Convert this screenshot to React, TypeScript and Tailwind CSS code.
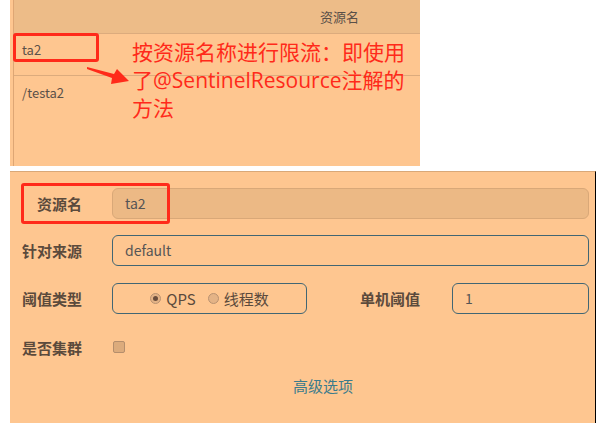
import type { ReactNode } from "react"

const font = { fontFamily: '"Noto Sans CJK SC", "Liberation Sans", sans-serif' }
const noteFont = { fontFamily: '"Open Sans", "Noto Sans CJK SC", sans-serif' }

function Label({ children, className = "" }: { children: ReactNode; className?: string }) {
  return (
    <div className={`whitespace-nowrap text-right text-[15px] font-bold leading-none text-[#5b4a3c] ${className}`}>
      {children}
    </div>
  )
}

function Radio({ checked, label }: { checked?: boolean; label: string }) {
  return (
    <span className="flex items-center gap-[5px]">
      <span className="flex h-[11px] w-[11px] items-center justify-center rounded-full border border-[#b99271] bg-[#e4b386]">
        {checked ? <span className="h-[5px] w-[5px] rounded-full bg-[#6b4e3d]" /> : null}
      </span>
      <span className="text-[15px] leading-none text-[#5b4a3c]">{label}</span>
    </span>
  )
}

export default function App() {
  return (
    <div className="relative h-[423px] w-[604px] overflow-hidden bg-white" style={font}>
      {/* table */}
      <section className="relative ml-[10px] h-[166px] w-[410px] bg-[#fec690] pl-[3px]">
        <div className="h-full border-l border-[#dea674]">
          <div className="flex h-[34px] items-center border-b border-[#dcab7d] bg-[#edbc88] pl-[306px] text-[13px] text-[#5a5048]">
            资源名
          </div>
          <div className="h-[42px] border-b border-[#dcab7d] pl-[8px] pt-[6px] text-[13px] text-[#5a5048]">ta2</div>
          <div className="h-[32px] pl-[8px] pt-[7px] text-[13px] text-[#5a5048]">/testa2</div>
        </div>

        <div className="absolute left-[3px] top-[33px] h-[29px] w-[86px] rounded-[3px] border-[3px] border-[#ff2a1a]" />
        <svg className="absolute left-[-10px] top-0" width="420" height="166" viewBox="0 0 420 166">
          <polygon points="87,67 114,74 117,69 129,81 111,84 112,78 87,69" fill="#ff2a1a" />
        </svg>
        <div
          className="absolute left-[122px] top-[38px] whitespace-nowrap text-[21px] leading-[28px] text-[#ff2a1a]"
          style={noteFont}
        >
          按资源名称进行限流：即使用
          <br />
          了@SentinelResource注解的
          <br />
          方法
        </div>
      </section>

      {/* form */}
      <section className="relative ml-[10px] mt-[5px] h-[252px] w-[586px] border-t border-r border-t-[#d9a878] border-r-black bg-[#fec690] pt-[16px]">
        <div className="flex h-[31px] items-center">
          <Label className="w-[72px]">资源名</Label>
          <div className="ml-[30px] flex h-[31px] w-[477px] items-center rounded-[6px] border border-[#d9a878] bg-[#ecb985] px-[12px] text-[14px] text-[#555]">
            ta2
          </div>
        </div>

        <div className="mt-[16px] flex h-[31px] items-center">
          <Label className="w-[72px]">针对来源</Label>
          <div className="ml-[30px] flex h-[31px] w-[477px] items-center rounded-[6px] border border-[#416674] px-[12px] text-[14px] text-[#555]">
            default
          </div>
        </div>

        <div className="mt-[17px] flex h-[31px] items-center">
          <Label className="w-[72px]">阈值类型</Label>
          <div className="ml-[30px] flex h-[31px] w-[195px] items-center justify-center gap-[12px] rounded-[6px] border border-[#416674]">
            <Radio checked label="QPS" />
            <Radio label="线程数" />
          </div>
          <Label className="ml-[53px] w-[60px]">单机阈值</Label>
          <div className="ml-[32px] flex h-[31px] w-[137px] items-center rounded-[6px] border border-[#416674] px-[12px] text-[14px] text-[#555]">
            1
          </div>
        </div>

        <div className="mt-[22px] flex h-[22px] items-center">
          <Label className="w-[72px]">是否集群</Label>
          <span className="ml-[31px] h-[12px] w-[12px] rounded-[2px] border border-[#b58e6c] bg-[#dcab7c]" />
        </div>

        <div className="mt-[20px] pl-[283px] text-[15px] leading-none text-[#3b7b8c]">高级选项</div>

        <div className="absolute left-[11px] top-[11px] h-[41px] w-[149px] rounded-[3px] border-[3px] border-[#ff2a1a]" />
      </section>
    </div>
  )
}
